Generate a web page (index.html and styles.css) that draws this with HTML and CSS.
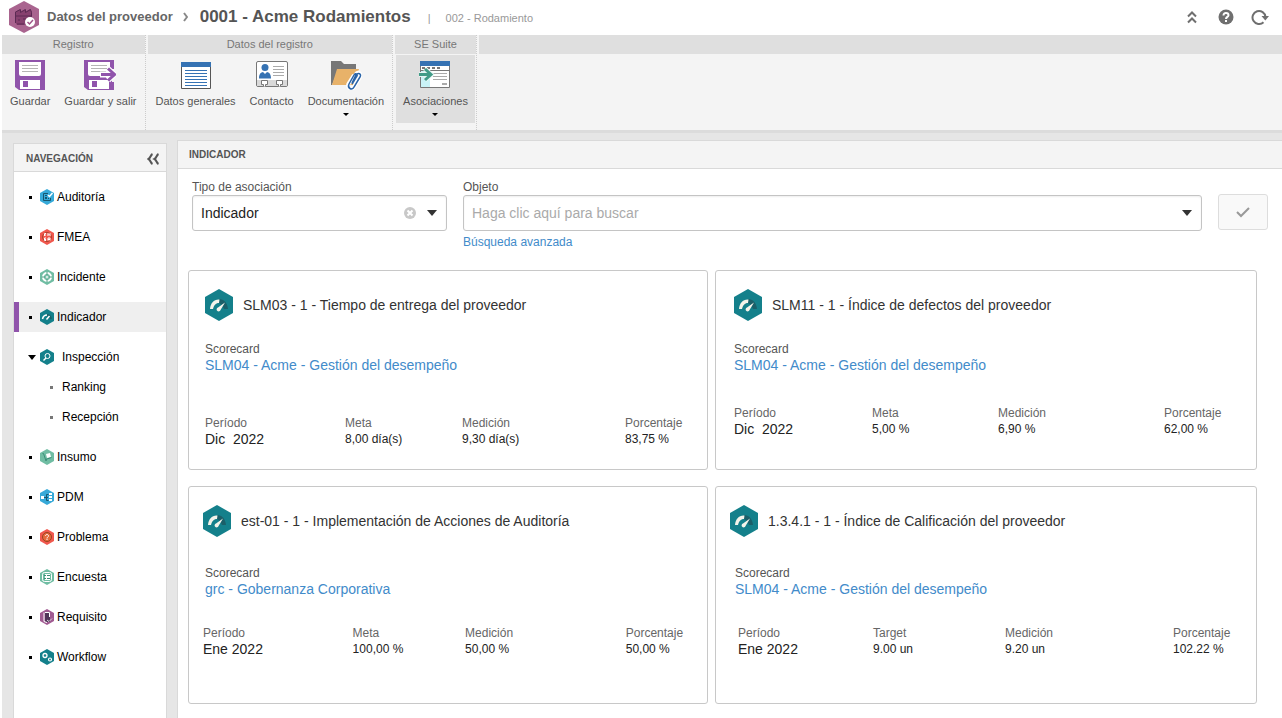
FILE: index.html
```html
<!DOCTYPE html>
<html lang="es">
<head>
<meta charset="utf-8">
<title>Datos del proveedor</title>
<link rel="stylesheet" href="styles.css">
</head>
<body>
<svg class="defs" aria-hidden="true">
  <symbol id="hex" viewBox="0 0 14 16"><path d="M7 0l7 4v8l-7 4-7-4V4z"/></symbol>
  <symbol id="gauge" viewBox="0 0 28 32">
    <path fill="#14808b" d="M14 0l14 8v16l-14 8L0 24V8z"/>
    <path fill="#1b5f69" d="M14 10c5 0 8.500 4 9 10h-4l-2-4-3-2z"/>
    <path fill="#f4f3ea" d="M5 20c.5-6 4-10 9.500-9.500L14 14c-3.500 0-5 2.500-6 6z"/>
    <path fill="#f4f3ea" d="M20 13.500l-4.500 7.500a2 2 0 1 1-2.500-2.500z"/>
  </symbol>
  <symbol id="floppy" viewBox="0 0 30 30">
    <path fill="#9054ab" d="M0 0h30v30H4l-4-3z"/>
    <path fill="#fff" d="M4 2h22v12a2 2 0 0 1-2 2H6a2 2 0 0 1-2-2zM5 20h20v9H5z"/>
    <path stroke="#b5b5b5" d="M7 5.500h16M7 8.500h16M7 11.500h16"/>
    <path fill="#9054ab" d="M8 21h5v6H8z"/>
  </symbol>
</svg>

<header class="top">
  <svg class="logo" viewBox="0 0 30 34" aria-hidden="true">
    <path fill="#a9648f" d="M15 1l15 8v16l-15 8-15-8V9z"/>
    <path fill="#87416f" d="M6 12l5-3v3l5-3v3l5-3 2 3v11l-6 2H8l-2-3z"/>
    <path fill="none" stroke="#5c2b54" d="M6.500 23V12l5-2.500v3l5-3v3l5-3 1 3v4M6 16h17M9 20h2m3-1h3M8 24h7"/>
    <circle cx="21" cy="22" r="5" fill="#fff"/>
    <path fill="none" stroke="#a05488" stroke-width="1.500" d="M18.500 22l2 2 3.500-4"/>
  </svg>
  <a class="crumb" href="#">Datos del proveedor</a>
  <svg class="chev" viewBox="0 0 5 10" aria-hidden="true"><path d="M1 1l3 4-3 4"/></svg>
  <h1>0001 - Acme Rodamientos</h1>
  <span class="bar">|</span>
  <span class="sub">002 - Rodamiento</span>
  <div class="tools">
    <button aria-label="Contraer"><svg width="10" height="14" viewBox="0 0 10 14"><path fill="none" stroke="#6f6f6f" stroke-width="2" d="M1 6.500l4-4 4 4M1 12.500l4-4 4 4"/></svg></button>
    <button aria-label="Ayuda"><svg width="16" height="16" viewBox="0 0 16 16"><circle cx="8" cy="8" r="7.500" fill="#6f6f6f"/><path fill="none" stroke="#fff" stroke-width="2" d="M5.500 6.500C5.500 3 10.500 3.500 10.500 6.200 10.500 8 8 7.800 8 10M8 11v2"/></svg></button>
    <button aria-label="Actualizar"><svg width="18" height="16" viewBox="0 0 18 16"><path fill="none" stroke="#6f6f6f" stroke-width="2" d="M12.500 13.200A6.500 6.500 0 1 1 14.500 8"/><path fill="#6f6f6f" d="M10.500 7H18l-3.700 4.500z"/></svg></button>
  </div>
</header>

<div class="ribbon">
  <section class="group">
    <h2>Registro</h2>
    <div class="acts">
      <button><svg width="30" height="30"><use href="#floppy"/></svg>Guardar</button>
      <button><svg width="32" height="30" viewBox="0 0 32 30"><use href="#floppy" width="30" height="30"/><path fill="#f4f4f4" d="M28 9h5v13h-5z"/><path fill="none" stroke="#fff" stroke-width="6" d="M16 14.500h14M24 9l6 5.500-6 5.500"/><path fill="none" stroke="#9054ab" stroke-width="3" d="M17 14.500h13M24 8.500l6.500 6-6.500 6"/></svg>Guardar y salir</button>
    </div>
  </section>
  <section class="group">
    <h2>Datos del registro</h2>
    <div class="acts">
      <button><svg width="30" height="30" viewBox="0 0 30 30"><path fill="#fff" stroke="#555" d="M.5 2.500h29v26H.5z"/><path fill="#3572b3" d="M0 2h30v5H0z"/><path stroke="#3572b3" d="M4 10.500h22M4 13.500h22M4 16.500h22M4 19.500h22M4 22.500h22M4 25.500h22"/></svg>Datos generales</button>
      <button><svg width="32" height="30" viewBox="0 0 32 30"><rect x=".5" y="1.500" width="31" height="25" rx="1.500" fill="#fff" stroke="#777"/><path fill="#d9d9d9" d="M1 20h30v6H1z"/><circle cx="9" cy="7.500" r="3.500" fill="#3572b3"/><path fill="#3572b3" d="M3 18.500c0-5 2-6 4-6.500l2 2 2-2c2 .5 4 1.500 4 6.500z"/><path stroke="#aaa" d="M17 6.500h11M17 9.500h11M17 12.500h11M17 15.500h11"/><path fill="#fff" stroke="#777" d="M7.500 26.500v-2h-2v-4h6v4h-2v2M22.500 26.500v-2h-2v-4h6v4h-2v2"/></svg>Contacto</button>
      <button><svg width="32" height="30" viewBox="0 0 32 30"><path fill="#777" d="M1 1h10l3 3h12v6H8L2 25H1z"/><path fill="#e8b269" d="M7 9h22l-6 16H2z"/><path fill="none" stroke="#fff" stroke-width="4" d="M21 23l5-9c2-3 6 0 4 3l-6 10c-3 4-8 0-5-4l5-8"/><path fill="none" stroke="#2a64a8" stroke-width="1.500" d="M22 23l4-8c2-3 6-1 4 2l-6 10c-2 4-7 1-5-3l5-9c1-2 4-1 3 1l-5 8"/></svg>Documentación<i class="caret"></i></button>
    </div>
  </section>
  <section class="group">
    <h2>SE Suite</h2>
    <div class="acts">
      <button class="on"><svg width="32" height="30" viewBox="0 0 32 30"><path fill="#fff" stroke="#777" d="M1.500 1.500h29v26h-29z"/><path fill="#3572b3" d="M1 1h30v5H1z"/><path fill="#c9f3f7" d="M2 11h9v16H2z"/><path stroke="#777" d="M2 10.500h29"/><path stroke="#777" stroke-width="2" stroke-dasharray="3 2" d="M3 8h18"/><path stroke="#aaa" d="M14 13.500h14M14 16.500h14M14 19.500h14M23 23.500h5M23 24.500h5"/><path fill="none" stroke="#e8f6f3" stroke-width="5" d="M0 14.500h10M6 9l6 5.500L6 20"/><path fill="none" stroke="#409b87" stroke-width="3" d="M-1 14.500h12M6 9l6 5.500L6 20"/></svg>Asociaciones<i class="caret"></i></button>
    </div>
  </section>
  <section class="group rest"><h2></h2></section>
</div>

<div class="work">
  <nav class="nav" aria-label="Navegación">
    <div class="navhead"><h2>NAVEGACIÓN</h2>
      <button aria-label="Contraer navegación"><svg width="13" height="12" viewBox="0 0 13 12"><path fill="none" stroke="#555" stroke-width="2" d="M5.500 1C3.500 2 3.500 5 1.500 6c2 1 2 4 4 5M11.500 1c-2 1-2 4-4 5 2 1 2 4 4 5"/></svg></button></div>
    <ul>
      <li><a href="#"><i class="dot"></i><svg class="ic" viewBox="0 0 14 16"><use href="#hex" fill="#36a9d8"/><path fill="none" stroke="#17566f" d="M10.500 9v2.500h-7v-7H8"/><path fill="#17566f" d="M5 6h2v1H5zM5 8h2v2H5zM8 9h1v1H8z"/><path fill="none" stroke="#fff" stroke-width="1.500" d="M8 6l1.500 1.500L12.500 4"/></svg>Auditoría</a></li>
      <li><a href="#"><i class="dot"></i><svg class="ic" viewBox="0 0 14 16"><use href="#hex" fill="#f0584e"/><circle cx="7" cy="8" r="4.500" fill="none" stroke="#a8452e"/><path stroke="#fff" fill="none" d="M4.500 7V4.500H6M4.500 6H6M8 7V4.500l1 1 1-1V7M6 9H4.500v2.500H6M4.500 10.500H6M8 11.500V9h2v2.500M8 10.500h2"/></svg>FMEA</a></li>
      <li><a href="#"><i class="dot"></i><svg class="ic" viewBox="0 0 14 16"><use href="#hex" fill="#70bda3"/><circle cx="7" cy="8" r="4" fill="none" stroke="#fff" stroke-width="2"/><path stroke="#4d9c83" d="M7 3v10M2 8h10"/><circle cx="7" cy="8" r="1.500" fill="#d5ece4"/></svg>Incidente</a></li>
      <li><a class="sel" href="#" aria-current="page"><i class="dot"></i><svg class="ic" viewBox="0 0 14 16"><use href="#hex" fill="#14808b"/><path fill="none" stroke="#1b5f69" stroke-width="2" d="M7 6c2 0 3.500 1.500 4 4"/><path fill="none" stroke="#fff" stroke-width="1.500" d="M2.500 10C3 7.500 4.500 6 7 6M6.500 10.500l3-3.500"/></svg>Indicador</a></li>
      <li><a class="parent" href="#"><i class="caret"></i><svg class="ic" viewBox="0 0 14 16"><use href="#hex" fill="#14808b"/><circle cx="7.500" cy="7" r="2.500" fill="none" stroke="#fff"/><path stroke="#fff" stroke-width="1.500" d="M6 9l-2.500 2.500"/></svg>Inspección</a>
        <ul class="inner">
          <li><a href="#"><i class="dot"></i>Ranking</a></li>
          <li><a href="#"><i class="dot"></i>Recepción</a></li>
        </ul></li>
      <li><a href="#"><i class="dot"></i><svg class="ic" viewBox="0 0 14 16"><use href="#hex" fill="#70bda3"/><path fill="#fff" d="M6 5l4-1 1 4-4 1z"/><path fill="none" stroke="#3b8d77" d="M2.500 4.500h1l2 6 6-2"/><circle cx="6" cy="11" r="1" fill="#3b8d77"/></svg>Insumo</a></li>
      <li><a href="#"><i class="dot"></i><svg class="ic" viewBox="0 0 14 16"><use href="#hex" fill="#36a9d8"/><path fill="#fff" d="M1 7h3v3H1zM9 4h3v2H9zM9 7h3v2H9zM9 10h3v2H9z"/><path fill="none" stroke="#17566f" d="M4 8.500h4M8.500 5.500h-2v6h2"/></svg>PDM</a></li>
      <li><a href="#"><i class="dot"></i><svg class="ic" viewBox="0 0 14 16"><use href="#hex" fill="#f0584e"/><circle cx="7" cy="8" r="4.500" fill="#e46a3c" stroke="#99431f"/><path fill="none" stroke="#fff" d="M5.500 7C5.500 5 8.500 5 8.500 7 8.500 8 7 8 7 9.500M7 10v1"/></svg>Problema</a></li>
      <li><a href="#"><i class="dot"></i><svg class="ic" viewBox="0 0 14 16"><use href="#hex" fill="#70bda3"/><rect x="2.500" y="3.500" width="9" height="9" rx="2" fill="none" stroke="#fff"/><path fill="#fff" d="M5 5h5v6H5z"/><path stroke="#3b8d77" d="M4 6.500h2M7 6.500h3M4 9.500h2M7 9.500h3"/></svg>Encuesta</a></li>
      <li><a href="#"><i class="dot"></i><svg class="ic" viewBox="0 0 14 16"><use href="#hex" fill="#a05a91"/><path fill="#503458" d="M5 3h5v10H5z"/><path fill="none" stroke="#fff" d="M4 3.500v9l3 1M5 3.500h4.500V8"/><path fill="none" stroke="#ddd" d="M7 11l2 1.500 3-3"/></svg>Requisito</a></li>
      <li><a href="#"><i class="dot"></i><svg class="ic" viewBox="0 0 14 16"><use href="#hex" fill="#14808b"/><circle cx="5" cy="6.500" r="2" fill="none" stroke="#fff" stroke-width="1.300"/><circle cx="10" cy="10.500" r="1.500" fill="none" stroke="#fff" stroke-width="1.200"/></svg>Workflow</a></li>
    </ul>
  </nav>

  <main class="main">
    <h2 class="mainhead">INDICADOR</h2>
    <form class="search">
      <div class="field type">
        <label for="tipo">Tipo de asociación</label>
        <div class="box">
          <select id="tipo"><option>Indicador</option></select>
          <button class="clear" type="button" aria-label="Borrar"><svg width="12" height="12" viewBox="0 0 12 12"><circle cx="6" cy="6" r="6" fill="#c8c8c8"/><path stroke="#fff" stroke-width="2" d="M3.500 3.500l5 5M8.500 3.500l-5 5"/></svg></button>
          <i class="caret big"></i>
        </div>
      </div>
      <div class="field object">
        <label for="objeto">Objeto</label>
        <div class="box">
          <input id="objeto" type="text" placeholder="Haga clic aquí para buscar">
          <i class="caret big"></i>
        </div>
        <a href="#">Búsqueda avanzada</a>
      </div>
      <button class="ok" type="button" aria-label="Confirmar"><svg width="14" height="12" viewBox="0 0 14 12"><path fill="none" stroke="#999" stroke-width="2" d="M1 6l4 4 8-8"/></svg></button>
    </form>

    <div class="cards">
      <article class="card">
        <h3><svg><use href="#gauge"/></svg>SLM03 - 1 - Tiempo de entrega del proveedor</h3>
        <div class="score"><span>Scorecard</span><a href="#">SLM04 - Acme - Gestión del desempeño</a></div>
        <dl>
          <div><dt>Período</dt><dd class="per">Dic&nbsp; 2022</dd></div>
          <div><dt>Meta</dt><dd>8,00 día(s)</dd></div>
          <div><dt>Medición</dt><dd>9,30 día(s)</dd></div>
          <div><dt>Porcentaje</dt><dd>83,75 %</dd></div>
        </dl>
      </article>
      <article class="card wide">
        <h3><svg><use href="#gauge"/></svg>SLM11 - 1 - Índice de defectos del proveedor</h3>
        <div class="score"><span>Scorecard</span><a href="#">SLM04 - Acme - Gestión del desempeño</a></div>
        <dl>
          <div><dt>Período</dt><dd class="per">Dic&nbsp; 2022</dd></div>
          <div><dt>Meta</dt><dd>5,00 %</dd></div>
          <div><dt>Medición</dt><dd>6,90 %</dd></div>
          <div><dt>Porcentaje</dt><dd>62,00 %</dd></div>
        </dl>
      </article>
      <article class="card lower">
        <h3><svg><use href="#gauge"/></svg>est-01 - 1 - Implementación de Acciones de Auditoría</h3>
        <div class="score"><span>Scorecard</span><a href="#">grc - Gobernanza Corporativa</a></div>
        <dl>
          <div><dt>Período</dt><dd class="per">Ene 2022</dd></div>
          <div><dt>Meta</dt><dd>100,00 %</dd></div>
          <div><dt>Medición</dt><dd>50,00 %</dd></div>
          <div><dt>Porcentaje</dt><dd>50,00 %</dd></div>
        </dl>
      </article>
      <article class="card wide lower">
        <h3><svg><use href="#gauge"/></svg>1.3.4.1 - 1 - Índice de Calificación del proveedor</h3>
        <div class="score"><span>Scorecard</span><a href="#">SLM04 - Acme - Gestión del desempeño</a></div>
        <dl>
          <div><dt>Período</dt><dd class="per">Ene 2022</dd></div>
          <div><dt>Target</dt><dd>9.00 un</dd></div>
          <div><dt>Medición</dt><dd>9.20 un</dd></div>
          <div><dt>Porcentaje</dt><dd>102.22 %</dd></div>
        </dl>
      </article>
    </div>
  </main>
</div>
</body>
</html>
```
FILE: styles.css
```css
* { box-sizing: border-box; }
body {
  margin: 0;
  min-height: 100vh;
  padding-left: 2px;
  display: flex;
  flex-direction: column;
  background: #fff;
  color: #555;
  font: 12px/16px "Liberation Sans", Arial, sans-serif;
}
h1, h2, h3, ul, dl, dd { margin: 0; padding: 0; }
ul { list-style: none; }
button { border: 0; padding: 0; background: none; color: inherit; font: inherit; }
svg { display: block; flex: none; }
a { color: #428bca; text-decoration: none; }
.defs { position: absolute; width: 0; height: 0; }

.caret {
  width: 0;
  height: 0;
  border: 3px solid transparent;
  border-top-color: #000;
  border-bottom: 0;
}
.caret.big { border-width: 6px 5px 0; border-top-color: #333; }

/* Title bar */
.top { display: flex; align-items: center; height: 35px; padding: 0 13px 2px 7px; }
.logo { width: 30px; height: 34px; }
.crumb { margin-left: 8px; color: #666; font-size: 13px; font-weight: bold; }
.chev { width: 5px; height: 10px; margin: 0 12px 0 10px; fill: none; stroke: #888; stroke-width: 2; }
.top h1 { color: #555; font-size: 17px; line-height: 20px; }
.bar, .sub { color: #999; font-size: 11px; padding-top: 2px; }
.bar { margin: 0 15px 0 17px; }
.tools { margin-left: auto; display: flex; align-items: center; gap: 16px; }
.tools button { display: grid; place-items: center; width: 18px; }

/* Ribbon */
.ribbon { display: flex; gap: 2px; height: 98px; background: #f4f4f4; border-bottom: 3px solid #dcdcdc; }
.group { border-right: 1px dotted #ccc; }
.group h2 { height: 19px; background: #dfdfdf; color: #777; font-size: 11px; font-weight: normal; line-height: 19px; text-align: center; }
.rest { flex: 1; border: 0; }
.acts { display: flex; padding: 1px 1px 0; }
.acts button { display: flex; flex-direction: column; align-items: center; height: 68px; padding: 5px 7px 0; font-size: 11px; white-space: nowrap; }
.acts svg { margin-bottom: 3px; }
.acts .caret { margin-top: 4px; }
.acts .on { background: #dfdfdf; }

/* Workspace */
.work { flex: 1; display: flex; gap: 10px; padding-left: 11px; background: #e6e6e6; }
.nav { width: 154px; margin-top: 10px; flex: none; background: #fff; border: 1px solid #d9d9d9; border-bottom: 0; }
.navhead { display: flex; align-items: center; justify-content: space-between; height: 28px; padding: 2px 6px 0 12px; background: #f4f4f4; border-bottom: 1px solid #d9d9d9; }
.navhead h2, .mainhead { color: #555; font-size: 11px; line-height: 16px; }
.navhead h2 { font-size: 10px; }
.mainhead { font-size: 10px; }
.nav > ul { display: flex; flex-direction: column; gap: 10px; padding-top: 10px; }
.nav a { display: flex; align-items: center; height: 30px; padding-left: 15px; color: #000; }
.nav .sel { background: #efefef; border-left: 5px solid #9054ab; padding-left: 10px; }
.dot { width: 3px; height: 3px; margin-right: 8px; background: #000; }
.ic { width: 14px; height: 16px; margin-right: 3px; }
.nav .parent { padding-left: 14px; }
.parent .caret { border-width: 5px 4px 0; margin-right: 4px; }
.parent .ic { margin-right: 8px; }
.nav .inner a { padding-left: 36px; }
.inner .dot { margin-right: 9px; background: #777; }

.main { flex: 1; margin-top: 7px; background: #fff; border: 1px solid #d9d9d9; border-right: 0; }
.mainhead { height: 28px; padding: 6px 11px 0; background: #f4f4f4; border-bottom: 1px solid #d9d9d9; }
.search { display: flex; gap: 16px; padding: 10px 14px 20px; }
.field label { display: block; color: #555; }
.type { width: 255px; }
.object { flex: 1; }
.object a { display: block; width: max-content; margin-top: 3px; }
.box { position: relative; height: 36px; border: 1px solid #c4c4c4; border-radius: 3px; box-shadow: inset 0 1px 2px #eee; }
.box select, .box input {
  width: 100%;
  height: 100%;
  padding: 0 32px 0 8px;
  appearance: none;
  border: 0;
  background: none;
  color: #222;
  font: 14px/20px "Liberation Sans", Arial, sans-serif;
}
.box input::placeholder { color: #aaa; }
.box .caret { position: absolute; top: 14px; right: 9px; pointer-events: none; }
.clear { position: absolute; top: 11px; right: 30px; }
.ok { display: grid; place-items: center; width: 50px; height: 36px; margin-top: 15px; border: 1px solid #ddd; border-radius: 3px; background: #f9f9f9; }

/* Indicator cards */
.cards { display: grid; grid-template-columns: 520fr 542fr; grid-template-rows: minmax(200px, auto) minmax(218px, auto); gap: 16px 7px; padding: 0 25px 14px 10px; }
.card { padding: 18px 16px; border: 1px solid #c8c8c8; border-radius: 3px; }
.card h3 { display: flex; align-items: center; gap: 10px; color: #333; font-size: 14px; font-weight: normal; }
.card h3 svg { width: 28px; height: 32px; }
.score { padding-top: 20px; }
.score span, .score a { display: block; }
.score a { font-size: 14px; }
.card dl { display: grid; grid-template-columns: 140fr 117fr 163fr 66fr; padding-top: 42px; white-space: nowrap; }
.card dt { color: #666; }
.card dd { color: #222; }
.card .per { font-size: 14px; }
.wide { padding: 18px; }
.wide dl { grid-template-columns: 138fr 126fr 166fr 74fr; padding-top: 32px; }
.lower { padding: 18px 14px; }
.lower .score { padding: 28px 0 0 2px; }
.lower dl { grid-template-columns: 149fr 112fr 160fr 67fr; padding-top: 28px; }
.lower.wide .score { padding-left: 5px; }
.lower.wide dl { grid-template-columns: 135fr 132fr 168fr 69fr; padding-left: 8px; }
```
